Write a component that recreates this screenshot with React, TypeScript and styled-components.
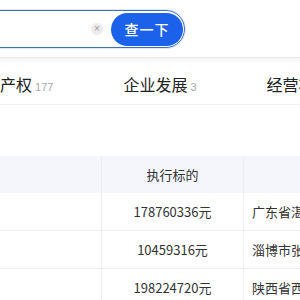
import React from 'react'
import styled, { createGlobalStyle } from 'styled-components'

const GlobalStyle = createGlobalStyle`
  html, body {
    margin: 0;
    padding: 0;
    background: #fff;
    overflow: hidden;
  }
  body {
    font-family: "Noto Sans CJK SC", "Liberation Sans", sans-serif;
    color: #333;
  }
`

const tabs = [
  { name: '知识产权', count: 177 },
  { name: '企业发展', count: 3 },
  { name: '经营状况', count: 52 },
]

const rows = [
  { who: '', amount: '178760336元', court: '广东省湛江市中级人民法院' },
  { who: '', amount: '10459316元', court: '淄博市张店区人民法院' },
  { who: '', amount: '198224720元', court: '陕西省西安市中级人民法院' },
]

function App() {
  return (
    <Page>
      <GlobalStyle />
      <SearchBar>
        <SearchBox>
          <SearchInput />
          <ClearIcon>×</ClearIcon>
          <SearchButton>查一下</SearchButton>
        </SearchBox>
      </SearchBar>
      <Shade />
      <TabRow>
        {tabs.map((t) => (
          <Tab key={t.name}>
            {t.name}
            <TabCount>{t.count}</TabCount>
          </Tab>
        ))}
      </TabRow>
      <Spacer />
      <Table>
        <HeadRow>
          <Cell />
          <Cell>执行标的</Cell>
          <Cell>执行法院</Cell>
        </HeadRow>
        {rows.map((r) => (
          <Row key={r.amount}>
            <Cell>{r.who}</Cell>
            <Cell>{r.amount}</Cell>
            <Cell $left>{r.court}</Cell>
          </Row>
        ))}
      </Table>
    </Page>
  )
}

export default App

const Page = styled.div`
  width: 300px;
  height: 300px;
  overflow: hidden;
`

const SearchBar = styled.div`
  height: 58px;
  padding-top: 10px;
  box-sizing: border-box;
  border-bottom: 1px solid #ececec;
`

const SearchBox = styled.div`
  display: flex;
  align-items: center;
  margin-left: -60px;
  width: 245px;
  height: 38px;
  box-sizing: border-box;
  border: 1.5px solid #3f6fb9;
  border-radius: 19px;
  padding-right: 1px;
  box-shadow: 0 0 0 1px #dde9f7;
`

const SearchInput = styled.div`
  flex: 1;
`

const ClearIcon = styled.span`
  width: 12px;
  height: 12px;
  border-radius: 50%;
  background: #ececec;
  color: #9a9a9a;
  font-size: 10px;
  line-height: 12px;
  text-align: center;
  font-family: "Liberation Sans", sans-serif;
  margin-right: 8px;
`

const SearchButton = styled.div`
  width: 72px;
  height: 33px;
  border-radius: 17px;
  background: #1c61ea;
  color: #fff;
  font-size: 14px;
  font-weight: 500;
  display: flex;
  align-items: center;
  justify-content: center;
  letter-spacing: 1px;
`

const Shade = styled.div`
  height: 6px;
  background: linear-gradient(#f3f3f3, #fff);
`

const TabRow = styled.div`
  display: flex;
  gap: 70px;
  margin-left: -32px;
  height: 40px;
  align-items: center;
  border-bottom: 1px solid #efefef;
  white-space: nowrap;
`

const Tab = styled.div`
  font-size: 16px;
  color: #222;
  display: flex;
  align-items: baseline;
`

const TabCount = styled.span`
  font-size: 11px;
  color: #a6a6a6;
  margin-left: 3px;
  font-family: "Liberation Sans", sans-serif;
`

const Spacer = styled.div`
  height: 51px;
`

const Table = styled.div`
  display: flex;
  flex-direction: column;
  width: 520px;
`

const Row = styled.div`
  display: grid;
  grid-template-columns: 101px 142px 277px;
  height: 37px;
  border-bottom: 1px solid #eceef3;
  font-size: 13px;
  color: #333;
`

const HeadRow = styled(Row)`
  height: 37px;
  background: #f4f6fb;
  border-bottom: none;
`

const Cell = styled.div<{ $left?: boolean }>`
  display: flex;
  align-items: center;
  justify-content: ${(p) => (p.$left ? 'flex-start' : 'center')};
  padding-left: ${(p) => (p.$left ? '8px' : '0')};
  border-left: 1px solid #eceef3;
  white-space: nowrap;
  overflow: hidden;
  &:first-child {
    border-left: none;
  }
`
